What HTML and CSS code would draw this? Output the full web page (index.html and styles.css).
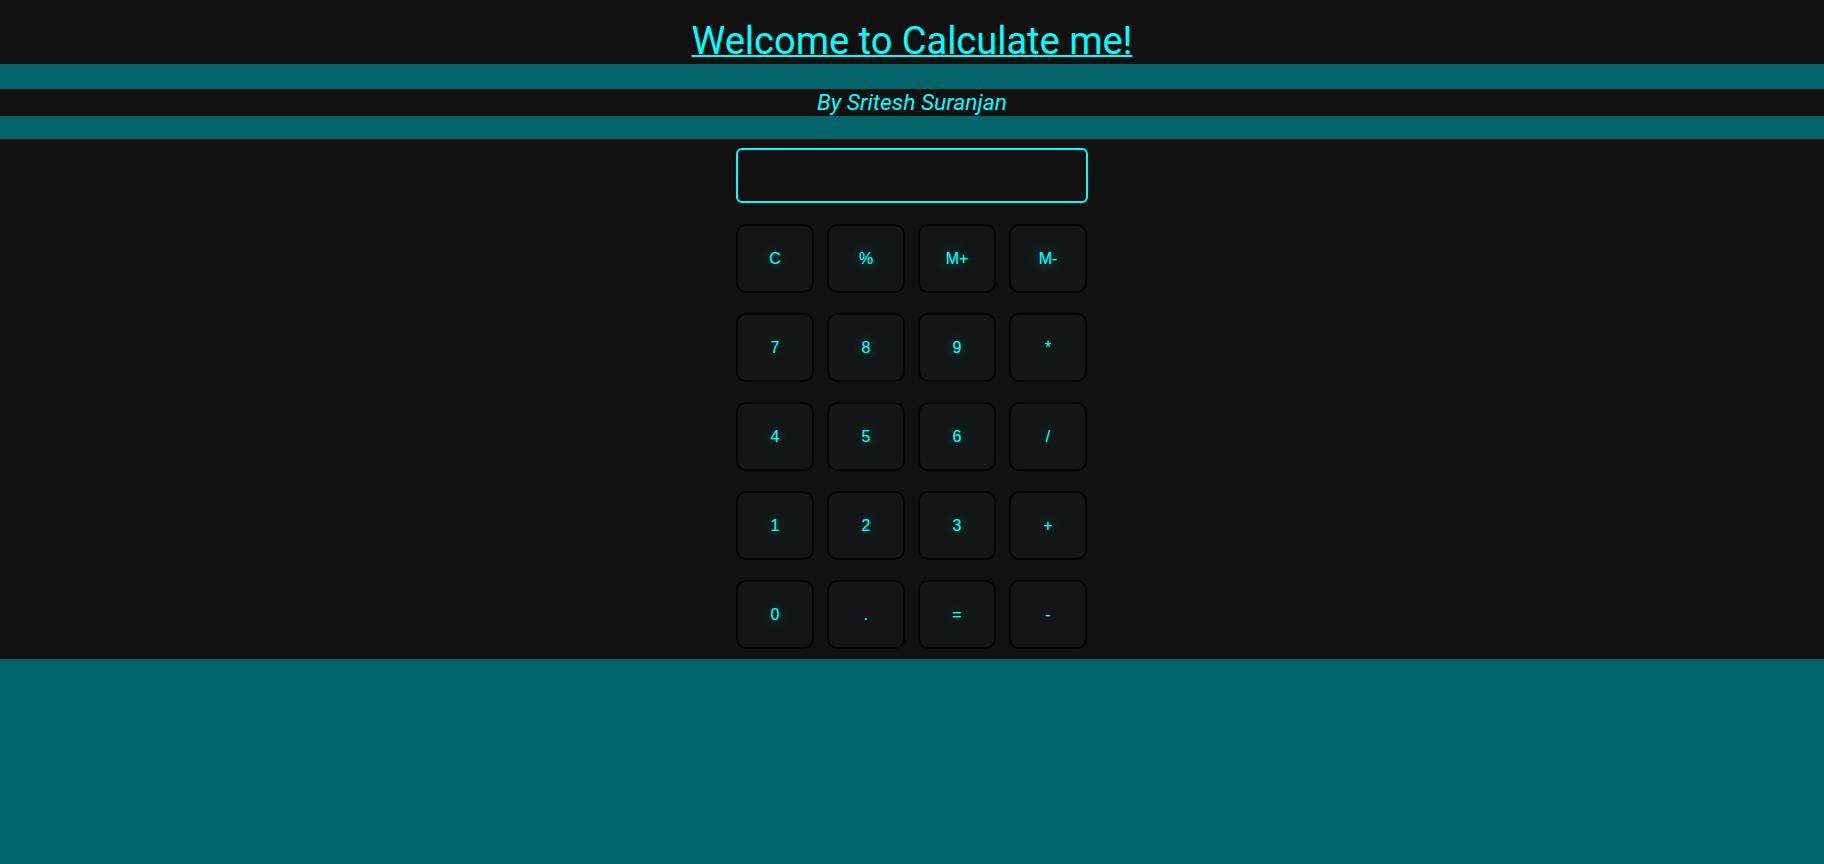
FILE: index.html
```html
<!DOCTYPE html>
<html lang="en">
<head>
<meta charset="utf-8">
<title>Calculate me</title>
<link rel="stylesheet" href="styles.css">
</head>
<body>
  <header class="title-bar">
    <h1 class="title"><a href="#" class="title-link">Welcome to Calculate me!</a></h1>
  </header>
  <div class="byline-bar">
    <h3 class="byline">By Sritesh Suranjan</h3>
  </div>
  <main class="calc-section">
    <div class="calc">
      <input class="display" type="text">
      <div class="keys">
        <button class="key">C</button>
        <button class="key">%</button>
        <button class="key">M+</button>
        <button class="key">M-</button>
        <button class="key">7</button>
        <button class="key">8</button>
        <button class="key">9</button>
        <button class="key">*</button>
        <button class="key">4</button>
        <button class="key">5</button>
        <button class="key">6</button>
        <button class="key">/</button>
        <button class="key">1</button>
        <button class="key">2</button>
        <button class="key">3</button>
        <button class="key">+</button>
        <button class="key">0</button>
        <button class="key">.</button>
        <button class="key">=</button>
        <button class="key">-</button>
      </div>
    </div>
  </main>
</body>
</html>
```

FILE: styles.css
```css
html, body {
  margin: 0;
  padding: 0;
}

body {
  background: #02656b;
  height: 864px;
  font-family: Roboto, "Liberation Sans", sans-serif;
}

.title-bar {
  background: #111111;
  height: 64px;
  box-sizing: border-box;
  padding-top: 19px;
  text-align: center;
}

.title {
  margin: 0;
  font-size: 38px;
  font-weight: 400;
  line-height: 45px;
}

.title-link {
  color: #00ffff;
  text-decoration: underline;
  text-decoration-thickness: 2px;
}

.byline-bar {
  background: #111111;
  margin-top: 25px;
  height: 27px;
  text-align: center;
}

.byline {
  margin: 0;
  font-size: 22.8px;
  font-style: italic;
  font-weight: 400;
  line-height: 27px;
  color: #00ffff;
}

.calc-section {
  background: #111111;
  margin-top: 23px;
  padding: 9px 0 10px;
  display: flex;
  justify-content: center;
}

.calc {
  width: 352px;
  display: flex;
  flex-direction: column;
  gap: 21px;
}

.display {
  box-sizing: border-box;
  width: 352px;
  height: 55px;
  margin: 0;
  background: #111111;
  border: 2px solid #00ffff;
  border-radius: 6px;
  outline: none;
  color: #00ffff;
  font-size: 20px;
}

.keys {
  display: grid;
  grid-template-columns: repeat(4, 78px);
  grid-auto-rows: 69px;
  column-gap: 13px;
  row-gap: 20px;
}

.key {
  margin: 0;
  padding: 0;
  background: #131616;
  border: 2px solid #050505;
  border-radius: 10px;
  color: #00ffff;
  font-family: "Liberation Sans", Arial, sans-serif;
  font-size: 16px;
  text-shadow: 0 0 1px rgba(0, 255, 200, 0.4), 0 0 14px rgba(0, 255, 220, 0.4), 0 0 32px rgba(0, 255, 255, 0.3);
  box-shadow: 0 0 18px rgba(0, 255, 255, 0.02);
}
```
